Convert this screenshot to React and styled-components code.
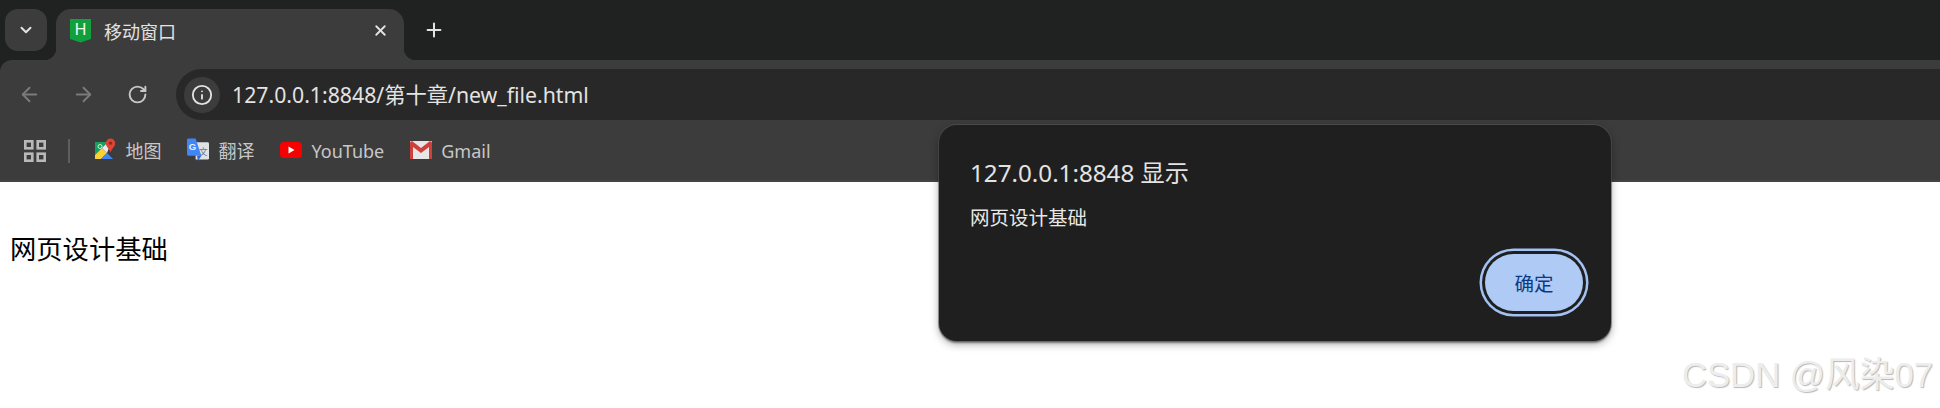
import React from 'react'
import styled, { createGlobalStyle } from 'styled-components'
import { ChevronDown, X, Plus, ArrowLeft, ArrowRight, RotateCw, Info } from 'lucide-react'

const GlobalStyle = createGlobalStyle`
  html, body { margin: 0; padding: 0; background: #fff; }
  body { font-family: "Noto Sans", "Noto Sans CJK SC", sans-serif; }
`

function Favicon() {
    return (
        <svg width="21" height="24" viewBox="0 0 21 24">
            <path d="M0 0h21v20l-10.500 3.500L0 20z" fill="#12a03e" />
            <text x="10.500" y="16" textAnchor="middle" fontFamily="Liberation Sans" fontSize="16" fill="#f0faf2">H</text>
        </svg>
    )
}

function AppsIcon() {
    return (
        <svg width="22" height="22" viewBox="0 0 22 22" fill="none" stroke="#b9b9b9" strokeWidth="2.6">
            <rect x="1.3" y="1.3" width="7" height="7" />
            <rect x="13.7" y="1.3" width="7" height="7" />
            <rect x="1.3" y="13.7" width="7" height="7" />
            <rect x="13.7" y="13.7" width="7" height="7" />
        </svg>
    )
}

function MapsIcon() {
    return (
        <svg width="22" height="23" viewBox="0 0 22 23">
            <path d="M1 4h13L1 17z" fill="#17a05d" />
            <path d="M1 21v-4L8 10l5 5-6 6z" fill="#fbd137" />
            <path d="M7 21l6-6 6 6z" fill="#4285f4" />
            <path d="M8 10l6-6h2v3l-3 8z" fill="#e8eaed" />
            <circle cx="6" cy="8.500" r="2" fill="none" stroke="#d6efe0" strokeWidth="1" />
            <path d="M16.500 0.500a4.700 4.700 0 0 1 4.700 4.700c0 3.300-3.200 5-4.700 9.300-1.500-4.300-4.700-6-4.700-9.300a4.700 4.700 0 0 1 4.700-4.700z" fill="#db4437" />
            <circle cx="16.500" cy="5.200" r="1.600" fill="#8c2a22" />
        </svg>
    )
}

function TranslateIcon() {
    return (
        <svg width="23" height="24" viewBox="0 0 23 24">
            <path d="M9 4h12.500a1.500 1.500 0 0 1 1.500 1.500v15a1.500 1.500 0 0 1-1.500 1.500H9z" fill="#dfe1e5" />
            <path d="M1.500 0H9l6 18H1.500A1.500 1.500 0 0 1 0 16.500V1.500A1.500 1.500 0 0 1 1.500 0z" fill="#4285f4" />
            <path d="M10.500 18h4.500l-3.500 5.500z" fill="#3367d6" />
            <text x="5.800" y="12" textAnchor="middle" fontFamily="Liberation Sans" fontWeight="700" fontSize="10" fill="#e8f0fe">G</text>
            <text x="17" y="17" textAnchor="middle" fontFamily="Noto Sans CJK SC" fontSize="9" fill="#6f7680">文</text>
        </svg>
    )
}

function YoutubeIcon() {
    return (
        <svg width="22" height="16" viewBox="0 0 22 16">
            <rect x="0" y="0" width="22" height="16" rx="4" fill="#f70000" />
            <path d="M8.500 4.500l6 3.500-6 3.500z" fill="#fff" />
        </svg>
    )
}

function GmailIcon() {
    return (
        <svg width="22" height="18" viewBox="0 0 22 18">
            <rect x="0" y="0" width="22" height="18" rx="1" fill="#e6e6e6" />
            <path d="M0 1.500V18h3V6l8 6 8-6v12h3V1.500L20 0l-9 7-9-7z" fill="#d0403a" />
        </svg>
    )
}

function App() {
    return (
        <Page>
            <GlobalStyle />
            <BrowserChrome>
                <TabStrip>
                    <TabSearch><ChevronDown size={18} strokeWidth={2.6} color="#e3e3e3" /></TabSearch>
                    <Tab>
                        <Favicon />
                        <TabTitle>移动窗口</TabTitle>
                        <TabClose><X size={17} strokeWidth={2.6} color="#e3e3e3" /></TabClose>
                    </Tab>
                    <NewTab><Plus size={22} strokeWidth={2.2} color="#e3e3e3" /></NewTab>
                </TabStrip>
                <Toolbar>
                    <NavButton><ArrowLeft size={23} strokeWidth={2} color="#7b7b7b" /></NavButton>
                    <NavButton><ArrowRight size={23} strokeWidth={2} color="#7b7b7b" /></NavButton>
                    <NavButton $last><RotateCw size={21} strokeWidth={2.2} color="#c7c7c7" /></NavButton>
                    <Omnibox>
                        <InfoChip><Info size={22} strokeWidth={2} color="#e3e3e3" /></InfoChip>
                        <Url>127.0.0.1:8848/第十章/new_file.html</Url>
                    </Omnibox>
                </Toolbar>
                <BookmarkBar>
                    <AppsIcon />
                    <Separator />
                    <Bookmark><IconSlot><MapsIcon /></IconSlot>地图</Bookmark>
                    <Bookmark><IconSlot><TranslateIcon /></IconSlot>翻译</Bookmark>
                    <Bookmark><IconSlot><YoutubeIcon /></IconSlot>YouTube</Bookmark>
                    <Bookmark><IconSlot><GmailIcon /></IconSlot>Gmail</Bookmark>
                </BookmarkBar>
            </BrowserChrome>
            <Content>网页设计基础</Content>
            <Dialog>
                <DialogTitle>127.0.0.1:8848 显示</DialogTitle>
                <DialogMessage>网页设计基础</DialogMessage>
                <DialogFooter>
                    <OkButton>确定</OkButton>
                </DialogFooter>
            </Dialog>
            <Watermark>CSDN @风染07</Watermark>
        </Page>
    )
}

export default App

const Page = styled.div`
    position: relative;
    width: 1940px;
    height: 408px;
    overflow: hidden;
    background: #fff;
`
const BrowserChrome = styled.div`
    background: #202221;
`
const TabStrip = styled.div`
    height: 60px;
    box-sizing: border-box;
    padding: 9px 0 0 5px;
    display: flex;
    align-items: flex-start;
`
const TabSearch = styled.div`
    width: 42px;
    height: 42px;
    border-radius: 13px;
    background: #3c3c3c;
    display: flex;
    align-items: center;
    justify-content: center;
`
const Tab = styled.div`
    position: relative;
    width: 348px;
    height: 51px;
    margin-left: 9px;
    box-sizing: border-box;
    padding: 0 14px 8px 14px;
    display: flex;
    align-items: center;
    background: #3c3c3c;
    border-radius: 15px 15px 0 0;

    &:before, &:after {
        content: "";
        position: absolute;
        bottom: 0;
        width: 12px;
        height: 12px;
    }
    &:before {
        left: -12px;
        background: radial-gradient(circle at 0 0, transparent 12px, #3c3c3c 12.5px);
    }
    &:after {
        right: -12px;
        background: radial-gradient(circle at 100% 0, transparent 12px, #3c3c3c 12.5px);
    }
`
const TabTitle = styled.span`
    margin-left: 13px;
    padding-top: 2px;
    font-size: 18px;
    line-height: 24px;
    color: #e3e3e3;
    flex: 1;
`
const TabClose = styled.div`
    width: 20px;
    height: 20px;
    display: flex;
    align-items: center;
    justify-content: center;
`
const NewTab = styled.div`
    width: 24px;
    height: 42px;
    margin-left: 18px;
    display: flex;
    align-items: center;
    justify-content: center;
`
const Toolbar = styled.div`
    height: 60px;
    box-sizing: border-box;
    padding: 9px 0 0 4px;
    display: flex;
    align-items: flex-start;
    background: #3c3c3c;
    border-radius: 12px 0 0 0;
`
const NavButton = styled.div`
    width: 50px;
    height: 51px;
    margin-right: ${props => (props.$last ? '14px' : '4px')};
    display: flex;
    align-items: center;
    justify-content: center;
`
const Omnibox = styled.div`
    flex: 1;
    height: 51px;
    box-sizing: border-box;
    padding-left: 8px;
    display: flex;
    align-items: center;
    background: #282828;
    border-radius: 26px 0 0 26px;
`
const InfoChip = styled.div`
    width: 36px;
    height: 36px;
    border-radius: 50%;
    background: #3c3c3c;
    display: flex;
    align-items: center;
    justify-content: center;
`
const Url = styled.span`
    margin-left: 12px;
    font-size: 21.25px;
    line-height: 28px;
    color: #e3e3e3;
`
const BookmarkBar = styled.div`
    height: 58px;
    padding: 2px 0 0 24px;
    display: flex;
    align-items: center;
    background: #3c3c3c;
    border-bottom: 2px solid #444;
`
const Separator = styled.div`
    width: 2px;
    height: 24px;
    margin: 0 24px 0 22px;
    background: #5e5e5e;
`
const Bookmark = styled.div`
    display: flex;
    align-items: center;
    margin-right: 25.5px;
    font-size: 18px;
    line-height: 24px;
    color: #c7c7c7;
`
const IconSlot = styled.span`
    width: 22px;
    height: 24px;
    margin: 0 9.5px 3px 0;
    display: flex;
    align-items: center;
    justify-content: center;
`
const Content = styled.div`
    margin: 51px 0 0 10px;
    font-family: "Noto Sans CJK SC", sans-serif;
    font-size: 26.3px;
    line-height: 30px;
    color: #000;
`
const Dialog = styled.div`
    position: absolute;
    left: 939px;
    top: 125px;
    width: 672px;
    height: 216px;
    box-sizing: border-box;
    padding: 34px 23px 0 31px;
    background: #1f1f1f;
    border-radius: 18px;
    box-shadow: 0 0 0 1px rgba(90, 90, 90, 0.55), 0 2px 2px rgba(0, 0, 0, 0.4), 0 3px 8px rgba(0, 0, 0, 0.35);
`
const DialogTitle = styled.div`
    font-size: 24.2px;
    line-height: 28px;
    color: #e3e3e3;
    white-space: nowrap;
`
const DialogMessage = styled.div`
    margin-top: 20px;
    font-family: "Noto Sans CJK SC", sans-serif;
    font-size: 19.5px;
    line-height: 20px;
    color: #e8e8e8;
`
const DialogFooter = styled.div`
    margin-top: 27px;
    padding-right: 5px;
    display: flex;
    justify-content: flex-end;
`
const OkButton = styled.div`
    width: 98px;
    height: 57px;
    border-radius: 29px;
    background: #afcbf5;
    box-shadow: 0 0 0 3px #1f1f1f, 0 0 0 5.5px #a3c2f2;
    display: flex;
    align-items: center;
    justify-content: center;
    font-family: "Noto Sans CJK SC", sans-serif;
    font-size: 19.5px;
    color: #0b3a82;
`
const Watermark = styled.div`
    position: absolute;
    right: 7px;
    top: 354px;
    font-family: "Liberation Sans", "Noto Sans CJK SC", sans-serif;
    font-size: 34.7px;
    line-height: 42px;
    color: #ededed;
    text-shadow: 1px 1px 1px #b8b8b8;
`
